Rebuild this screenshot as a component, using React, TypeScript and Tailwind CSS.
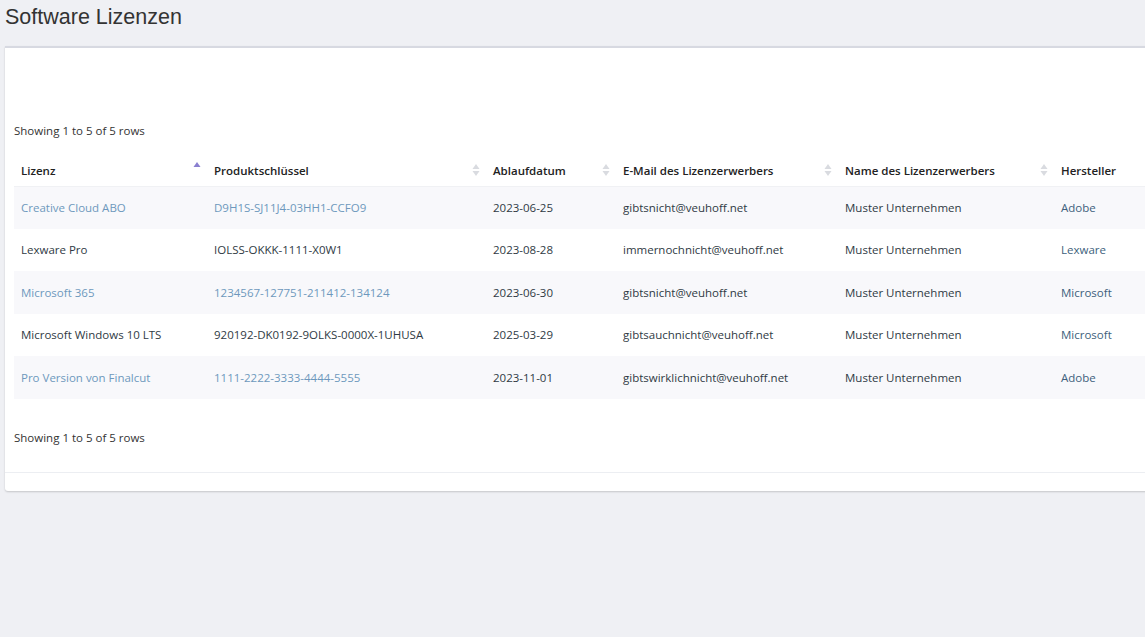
type Row = {
  lizenz: string
  key: string
  date: string
  email: string
  name: string
  vendor: string
  linked: boolean
}

const rows: Row[] = [
  {
    lizenz: 'Creative Cloud ABO',
    key: 'D9H1S-SJ11J4-03HH1-CCFO9',
    date: '2023-06-25',
    email: 'gibtsnicht@veuhoff.net',
    name: 'Muster Unternehmen',
    vendor: 'Adobe',
    linked: true
  },
  {
    lizenz: 'Lexware Pro',
    key: 'IOLSS-OKKK-1111-X0W1',
    date: '2023-08-28',
    email: 'immernochnicht@veuhoff.net',
    name: 'Muster Unternehmen',
    vendor: 'Lexware',
    linked: false
  },
  {
    lizenz: 'Microsoft 365',
    key: '1234567-127751-211412-134124',
    date: '2023-06-30',
    email: 'gibtsnicht@veuhoff.net',
    name: 'Muster Unternehmen',
    vendor: 'Microsoft',
    linked: true
  },
  {
    lizenz: 'Microsoft Windows 10 LTS',
    key: '920192-DK0192-9OLKS-0000X-1UHUSA',
    date: '2025-03-29',
    email: 'gibtsauchnicht@veuhoff.net',
    name: 'Muster Unternehmen',
    vendor: 'Microsoft',
    linked: false
  },
  {
    lizenz: 'Pro Version von Finalcut',
    key: '1111-2222-3333-4444-5555',
    date: '2023-11-01',
    email: 'gibtswirklichnicht@veuhoff.net',
    name: 'Muster Unternehmen',
    vendor: 'Adobe',
    linked: true
  }
]

const columns = [
  { label: 'Lizenz', width: 'w-[193px]', active: true },
  { label: 'Produktschlüssel', width: 'w-[279px]', active: false },
  { label: 'Ablaufdatum', width: 'w-[130px]', active: false },
  { label: 'E-Mail des Lizenzerwerbers', width: 'w-[222px]', active: false },
  { label: 'Name des Lizenzerwerbers', width: 'w-[216px]', active: false },
  { label: 'Hersteller', width: 'w-[110px]', active: false }
]

function SortIcon({ active }: { active: boolean }) {
  if (active) {
    return (
      <svg width="8" height="12" viewBox="0 0 8 12" className="absolute right-[6px] top-[6px]">
        <path d="M4 1 L7.5 6 L0.5 6 Z" fill="#8a7fd0" />
      </svg>
    )
  }
  return (
    <svg width="8" height="14" viewBox="0 0 8 14" className="absolute right-[6px] top-[8px]">
      <path d="M4 1 L7.5 6 L0.5 6 Z" fill="#d9dbe0" />
      <path d="M4 13 L7.5 8 L0.5 8 Z" fill="#d9dbe0" />
    </svg>
  )
}

export default function App() {
  return (
    <div
      className="h-[637px] w-[1145px] overflow-hidden bg-[#eff0f4] text-[#2f3a44]"
      style={{ fontFamily: '"Open Sans", "Noto Sans", sans-serif' }}
    >
      <div className="h-[46px] pl-[5px] pt-[3px]">
        <h1
          className="text-[21.5px] leading-[28px] text-[#333]"
          style={{ fontFamily: '"Liberation Sans", Arial, sans-serif' }}
        >
          Software Lizenzen
        </h1>
      </div>

      <div className="ml-[5px] w-[1300px] rounded-b-[3px] border-t-2 border-[#d7d9e1] bg-white shadow-[0_1px_2px_rgba(0,0,0,0.18)]">
        <div className="px-[9px]">
          <div className="h-[74px]" />
          <div className="h-[18px] text-[11.5px] leading-[18px] text-[#333]">Showing 1 to 5 of 5 rows</div>

          <table className="mt-[15px] w-[1240px] table-fixed border-collapse text-[11.5px]">
            <colgroup>
              {columns.map((col) => (
                <col key={col.label} className={col.width} />
              ))}
              <col />
            </colgroup>
            <thead>
              <tr className="h-[31px] border-b border-[#f0f1f4]">
                {columns.map((col) => (
                  <th
                    key={col.label}
                    className="relative pl-[7px] text-left align-middle font-semibold whitespace-nowrap text-[#222]"
                  >
                    {col.label}
                    <SortIcon active={col.active} />
                  </th>
                ))}
                <th />
              </tr>
            </thead>
            <tbody>
              {rows.map((row, i) => {
                const link = row.linked ? 'text-[#6e98bd]' : 'text-[#2f3a44]'
                return (
                  <tr key={row.lizenz} className={`h-[42.6px] ${i % 2 === 0 ? 'bg-[#f8f8fb]' : 'bg-white'}`}>
                    <td className={`pl-[7px] whitespace-nowrap ${link}`}>{row.lizenz}</td>
                    <td className={`pl-[7px] whitespace-nowrap ${link}`}>{row.key}</td>
                    <td className="pl-[7px] text-[#2f3a44]">{row.date}</td>
                    <td className="pl-[7px] text-[#2f3a44]">{row.email}</td>
                    <td className="pl-[7px] text-[#2f3a44]">{row.name}</td>
                    <td className="pl-[7px] text-[#3d5f7c]">{row.vendor}</td>
                    <td />
                  </tr>
                )
              })}
            </tbody>
          </table>

          <div className="mt-[30px] h-[18px] text-[11.5px] leading-[18px] text-[#333]">Showing 1 to 5 of 5 rows</div>
          <div className="h-[25px]" />
        </div>
        <div className="h-[19px] border-t border-[#eceef2]" />
      </div>
    </div>
  )
}
